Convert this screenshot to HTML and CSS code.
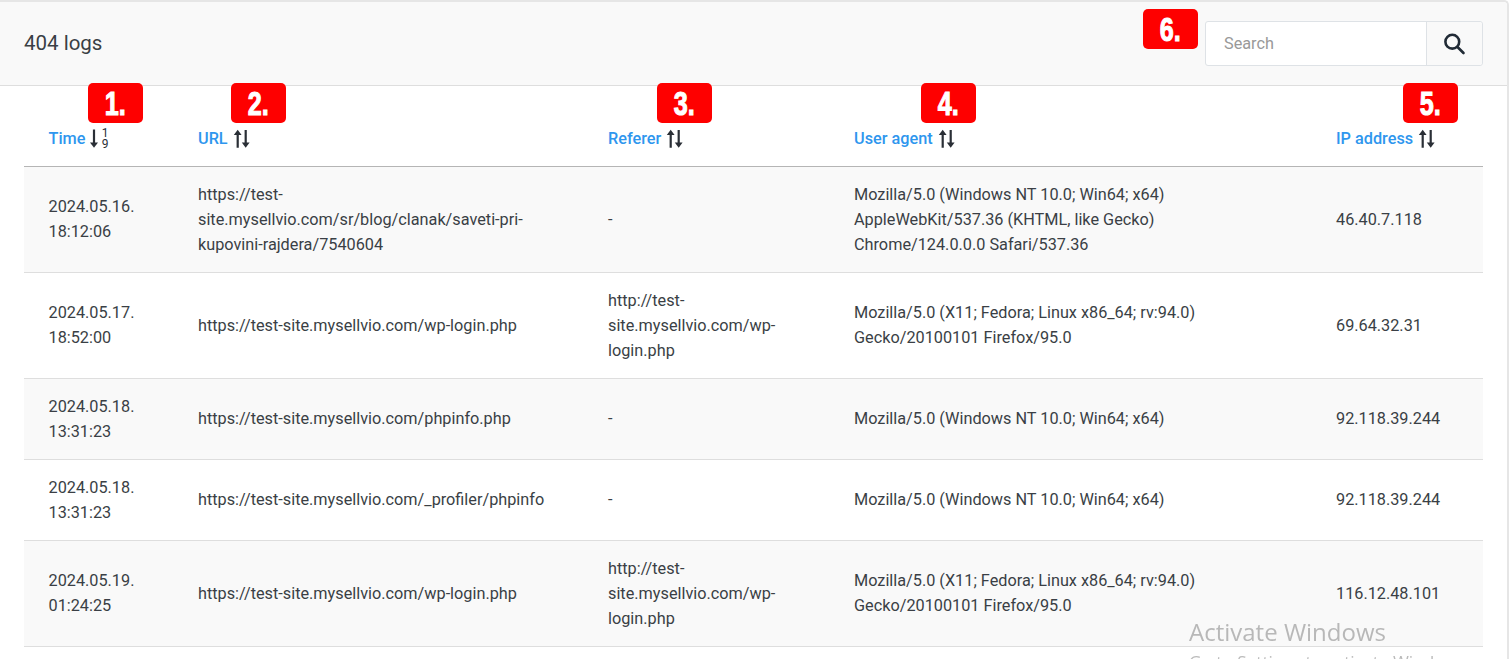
FILE: index.html
```html
<!DOCTYPE html>
<html lang="en">
<head>
<meta charset="utf-8">
<title>404 logs</title>
<link rel="stylesheet" href="styles.css">
</head>
<body>
<div class="card">
  <header class="card-head">
    <h1 class="title">404 logs</h1>
    <form class="search">
      <input class="search-input" type="text" placeholder="Search">
      <button class="search-btn" type="button" aria-label="Search">
        <svg width="22" height="22" viewBox="0 0 22 22" fill="none" stroke="#212b36" stroke-width="2.6" stroke-linecap="round"><circle cx="8.300" cy="8.700" r="6.900"/><path d="M13.500 14 19.500 20"/></svg>
      </button>
    </form>
    <span class="badge badge-6"><span class="num">6.</span></span>
  </header>
  <table class="logs">
    <colgroup><col class="c1"><col class="c2"><col class="c3"><col class="c4"><col class="c5"></colgroup>
    <thead>
      <tr>
        <th><span class="badge badge-1"><span class="num">1.</span></span><span class="th-inner"><a href="#">Time</a>
          <svg class="sort" width="20" height="24" viewBox="0 0 20 24"><path d="M4 2.500v14" fill="none" stroke="#2a2f36" stroke-width="2.200"/><path d="M0 15.500h8L4 20.700z" fill="#2a2f36"/><text x="15" y="10" class="sort-n">1</text><text x="15" y="21" class="sort-n">9</text></svg></span></th>
        <th><span class="badge badge-2"><span class="num">2.</span></span><span class="th-inner"><a href="#">URL</a>
          <svg class="sort" width="18" height="24" viewBox="0 0 18 24"><path d="M4.700 20.700V6M12.700 3v14" fill="none" stroke="#2a2f36" stroke-width="2.200"/><path d="M.8 8h7.800L4.700 2.800zM8.800 15.500h7.800l-3.900 5.200z" fill="#2a2f36"/></svg></span></th>
        <th><span class="badge badge-3"><span class="num">3.</span></span><span class="th-inner"><a href="#">Referer</a>
          <svg class="sort" width="18" height="24" viewBox="0 0 18 24"><path d="M4.700 20.700V6M12.700 3v14" fill="none" stroke="#2a2f36" stroke-width="2.200"/><path d="M.8 8h7.800L4.700 2.800zM8.800 15.500h7.800l-3.900 5.200z" fill="#2a2f36"/></svg></span></th>
        <th><span class="badge badge-4"><span class="num">4.</span></span><span class="th-inner"><a href="#">User agent</a>
          <svg class="sort" width="18" height="24" viewBox="0 0 18 24"><path d="M4.700 20.700V6M12.700 3v14" fill="none" stroke="#2a2f36" stroke-width="2.200"/><path d="M.8 8h7.800L4.700 2.800zM8.800 15.500h7.800l-3.900 5.200z" fill="#2a2f36"/></svg></span></th>
        <th><span class="badge badge-5"><span class="num">5.</span></span><span class="th-inner"><a href="#">IP address</a>
          <svg class="sort" width="18" height="24" viewBox="0 0 18 24"><path d="M4.700 20.700V6M12.700 3v14" fill="none" stroke="#2a2f36" stroke-width="2.200"/><path d="M.8 8h7.800L4.700 2.800zM8.800 15.500h7.800l-3.900 5.200z" fill="#2a2f36"/></svg></span></th>
      </tr>
    </thead>
    <tbody>
      <tr>
        <td>2024.05.16.<br>18:12:06</td>
        <td>https://test-site.mysellvio.com/sr/blog/clanak/saveti-pri-kupovini-rajdera/7540604</td>
        <td>-</td>
        <td>Mozilla/5.0 (Windows NT 10.0; Win64; x64) AppleWebKit/537.36 (KHTML, like Gecko) Chrome/124.0.0.0 Safari/537.36</td>
        <td>46.40.7.118</td>
      </tr>
      <tr>
        <td>2024.05.17.<br>18:52:00</td>
        <td>https://test-site.mysellvio.com/wp-login.php</td>
        <td>http://test-site.mysellvio.com/wp-login.php</td>
        <td>Mozilla/5.0 (X11; Fedora; Linux x86_64; rv:94.0) Gecko/20100101 Firefox/95.0</td>
        <td>69.64.32.31</td>
      </tr>
      <tr>
        <td>2024.05.18.<br>13:31:23</td>
        <td>https://test-site.mysellvio.com/phpinfo.php</td>
        <td>-</td>
        <td>Mozilla/5.0 (Windows NT 10.0; Win64; x64)</td>
        <td>92.118.39.244</td>
      </tr>
      <tr>
        <td>2024.05.18.<br>13:31:23</td>
        <td>https://test-site.mysellvio.com/_profiler/phpinfo</td>
        <td>-</td>
        <td>Mozilla/5.0 (Windows NT 10.0; Win64; x64)</td>
        <td>92.118.39.244</td>
      </tr>
      <tr>
        <td>2024.05.19.<br>01:24:25</td>
        <td>https://test-site.mysellvio.com/wp-login.php</td>
        <td>http://test-site.mysellvio.com/wp-login.php</td>
        <td>Mozilla/5.0 (X11; Fedora; Linux x86_64; rv:94.0) Gecko/20100101 Firefox/95.0</td>
        <td>116.12.48.101</td>
      </tr>
    </tbody>
  </table>
</div>
<div class="watermark">
  <div class="wm-1">Activate Windows</div>
  <div class="wm-2">Go to Settings to activate Windows.</div>
</div>
</body>
</html>
```
FILE: styles.css
```css
html, body {
  margin: 0;
  padding: 0;
  height: 659px;
  overflow: hidden;
  background: #fff;
}
body {
  font-family: Roboto, "Liberation Sans", sans-serif;
  font-size: 16.25px;
  line-height: 25px;
  color: #3a3f45;
}
.card {
  position: relative;
  box-sizing: border-box;
  min-height: 659px;
  border-top: 2px solid #e6e6e6;
  border-right: 2px solid #e6e6e6;
  border-top-right-radius: 5px;
  padding-bottom: 24px;
}
.card-head {
  position: relative;
  height: 83px;
  display: flex;
  align-items: center;
  justify-content: space-between;
  padding: 0 24px 0 24px;
  background: #f9f9f9;
  border-bottom: 1px solid #dedede;
  border-top-right-radius: 4px;
}
.title {
  margin: 0;
  font-size: 20.500px;
  font-weight: 400;
  color: #3a3f45;
}
.search {
  display: flex;
  width: 278px;
  height: 45px;
  box-sizing: border-box;
  border: 1px solid #dee2e6;
  border-radius: 3px;
  background: #fff;
}
.search-input {
  flex: 1;
  min-width: 0;
  border: 0;
  outline: 0;
  padding: 0 18px;
  background: transparent;
  font: 16.25px Roboto, "Liberation Sans", sans-serif;
  color: #3a3f45;
}
.search-input::placeholder { color: #999; opacity: 1; }
.search-btn {
  width: 56px;
  border: 0;
  border-left: 1px solid #dee2e6;
  background: #f9f9f9;
  border-radius: 0 3px 3px 0;
  padding: 0;
  display: flex;
  align-items: center;
  justify-content: center;
}
.logs {
  width: 1459px;
  margin-left: 24px;
  border-collapse: collapse;
  table-layout: fixed;
}
.c1 { width: 149px; }
.c2 { width: 410px; }
.c3 { width: 246px; }
.c4 { width: 482px; }
.c5 { width: 172px; }
.logs th {
  position: relative;
  height: 80px;
  padding: 0 25px;
  box-sizing: border-box;
  text-align: left;
  vertical-align: middle;
  font-weight: 500;
  border-bottom: 1px solid #b5b5b5;
}
.th-inner {
  display: inline-flex;
  align-items: center;
  gap: 5px;
  position: relative;
  top: 13px;
}
.logs th a {
  color: #2e96ee;
  text-decoration: none;
}
.sort { display: block; }
.sort-n {
  font: 400 12px Roboto, "Liberation Sans", sans-serif;
  fill: #2a2f36;
  text-anchor: middle;
}
.logs td {
  padding: 15px 25px;
  vertical-align: middle;
  border-bottom: 1px solid #dedede;
}
.logs th:first-child, .logs td:first-child { padding-left: 24.500px; }
.logs tbody tr:nth-child(odd) { background: #f9f9f9; }
.badge {
  position: absolute;
  top: -3px;
  width: 55px;
  height: 40px;
  box-sizing: border-box;
  background: #fe0000;
  border-radius: 5px;
  color: #fff;
  font: 700 34px/40px "Liberation Sans", sans-serif;
  -webkit-text-stroke: 1.100px #fff;
  text-align: center;
}
.num {
  display: inline-block;
  transform: scaleX(0.74);
}
.badge-1 { left: 64px; }
.badge-2 { left: 58px; }
.badge-3 { left: 74px; }
.badge-4 { left: 92px; }
.badge-5 { left: 92px; }
.badge-6 { top: 7px; left: 1143px; }
.watermark {
  position: fixed;
  left: 1189px;
  top: 616px;
  color: rgba(120, 120, 120, 0.5);
  font-family: "Open Sans", sans-serif;
  white-space: nowrap;
}
.wm-1 { font-size: 24px; line-height: 32px; }
.wm-2 { font-size: 17.200px; line-height: 20px; margin-top: 4px; }
```
